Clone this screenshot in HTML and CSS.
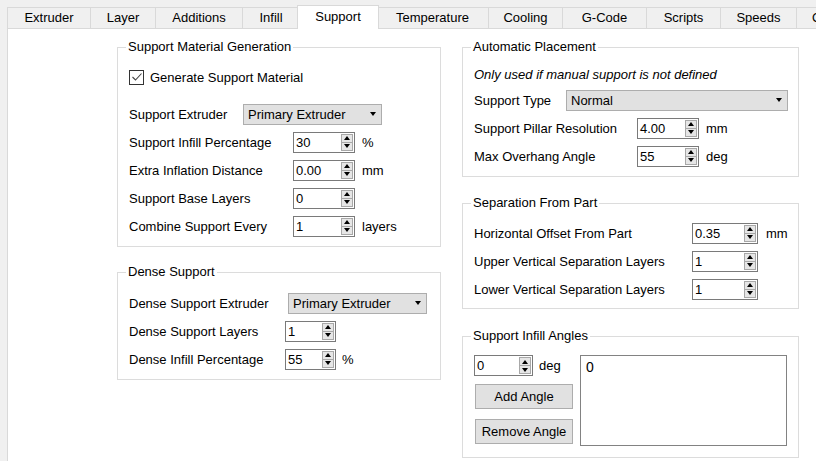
FILE: index.html
```html
<!DOCTYPE html>
<html lang="en">
<head>
<meta charset="utf-8">
<title>Support</title>
<link rel="stylesheet" href="styles.css">
</head>
<body>
<div class="tabbar">
  <div class="tab t-extruder">Extruder</div>
  <div class="tab t-layer">Layer</div>
  <div class="tab t-additions">Additions</div>
  <div class="tab t-infill">Infill</div>
  <div class="tab t-support active">Support</div>
  <div class="tab t-temperature">Temperature</div>
  <div class="tab t-cooling">Cooling</div>
  <div class="tab t-gcode">G-Code</div>
  <div class="tab t-scripts">Scripts</div>
  <div class="tab t-speeds">Speeds</div>
  <div class="tab t-other">Other</div>
</div>
<div class="pane">
  <div class="columns">
    <div class="col col-left">
      <div class="group g-gen">
        <div class="group-title">Support Material Generation</div>
        <div class="check-row">
          <span class="checkbox"><svg width="12" height="12" viewBox="0 0 12 12"><polyline points="1.5,6 4.5,9 10.5,2.5" fill="none" stroke="#444" stroke-width="1.1"/></svg></span>
          <span class="check-label">Generate Support Material</span>
        </div>
        <div class="combo-row r-ext">
          <span class="label">Support Extruder</span>
          <div class="combo w-ext"><span class="combo-text">Primary Extruder</span><span class="combo-arrow"></span></div>
        </div>
        <div class="grid g-left">
          <span class="label">Support Infill Percentage</span>
          <div class="spin w62"><span class="val">30</span><span class="btns"><span class="up"></span><span class="dn"></span></span></div>
          <span class="unit">%</span>
          <span class="label">Extra Inflation Distance</span>
          <div class="spin w62"><span class="val">0.00</span><span class="btns"><span class="up"></span><span class="dn"></span></span></div>
          <span class="unit">mm</span>
          <span class="label">Support Base Layers</span>
          <div class="spin w62"><span class="val">0</span><span class="btns"><span class="up"></span><span class="dn"></span></span></div>
          <span class="unit"></span>
          <span class="label">Combine Support Every</span>
          <div class="spin w62"><span class="val">1</span><span class="btns"><span class="up"></span><span class="dn"></span></span></div>
          <span class="unit">layers</span>
        </div>
      </div>
      <div class="group g-dense">
        <div class="group-title">Dense Support</div>
        <div class="combo-row r-dense">
          <span class="label">Dense Support Extruder</span>
          <div class="combo w-ext"><span class="combo-text">Primary Extruder</span><span class="combo-arrow"></span></div>
        </div>
        <div class="grid g-dense-grid">
          <span class="label">Dense Support Layers</span>
          <div class="spin w51"><span class="val">1</span><span class="btns"><span class="up"></span><span class="dn"></span></span></div>
          <span class="unit"></span>
          <span class="label">Dense Infill Percentage</span>
          <div class="spin w51"><span class="val">55</span><span class="btns"><span class="up"></span><span class="dn"></span></span></div>
          <span class="unit u6">%</span>
        </div>
      </div>
    </div>
    <div class="col col-right">
      <div class="group g-auto">
        <div class="group-title">Automatic Placement</div>
        <div class="note">Only used if manual support is not defined</div>
        <div class="combo-row r-type">
          <span class="label">Support Type</span>
          <div class="combo w-type"><span class="combo-text">Normal</span><span class="combo-arrow"></span></div>
        </div>
        <div class="grid g-auto-grid">
          <span class="label">Support Pillar Resolution</span>
          <div class="spin w62"><span class="val">4.00</span><span class="btns"><span class="up"></span><span class="dn"></span></span></div>
          <span class="unit">mm</span>
          <span class="label">Max Overhang Angle</span>
          <div class="spin w62"><span class="val">55</span><span class="btns"><span class="up"></span><span class="dn"></span></span></div>
          <span class="unit">deg</span>
        </div>
      </div>
      <div class="group g-sep">
        <div class="group-title">Separation From Part</div>
        <div class="grid g-sep-grid">
          <span class="label">Horizontal Offset From Part</span>
          <div class="spin w66"><span class="val">0.35</span><span class="btns"><span class="up"></span><span class="dn"></span></span></div>
          <span class="unit u8">mm</span>
          <span class="label">Upper Vertical Separation Layers</span>
          <div class="spin w66"><span class="val">1</span><span class="btns"><span class="up"></span><span class="dn"></span></span></div>
          <span class="unit"></span>
          <span class="label">Lower Vertical Separation Layers</span>
          <div class="spin w66"><span class="val">1</span><span class="btns"><span class="up"></span><span class="dn"></span></span></div>
          <span class="unit"></span>
        </div>
      </div>
      <div class="group g-angles">
        <div class="group-title">Support Infill Angles</div>
        <div class="angles">
          <div class="angles-left">
            <div class="angle-input">
              <div class="spin w59"><span class="val">0</span><span class="btns"><span class="up"></span><span class="dn"></span></span></div>
              <span class="unit u6">deg</span>
            </div>
            <div class="button">Add Angle</div>
            <div class="button b2">Remove Angle</div>
          </div>
          <div class="listbox">0</div>
        </div>
      </div>
    </div>
  </div>
</div>
</body>
</html>
```
FILE: styles.css
```css
* { box-sizing: border-box; }
html, body { margin: 0; padding: 0; }
body {
  width: 816px;
  height: 461px;
  overflow: hidden;
  background: #f0f0f0;
  font-family: "Liberation Sans", Arial, sans-serif;
  font-size: 13px;
  color: #000;
}
.tabbar {
  display: flex;
  padding: 7px 0 0 7px;
  height: 28px;
  white-space: nowrap;
}
.tab {
  height: 21px;
  line-height: 20px;
  padding: 0;
  text-align: center;
  border: 1px solid #d9d9d9;
  border-bottom: none;
  margin-left: -1px;
  background: #f0f0f0;
  flex: none;
}
.tab:first-child { margin-left: 0; }
.t-extruder { width: 84px; }
.t-layer { width: 66px; }
.t-additions { width: 88px; }
.t-infill { width: 58px; }
.t-support { width: 82px; }
.t-temperature { width: 113px; }
.t-cooling { width: 75px; }
.t-gcode { width: 85px; }
.t-scripts { width: 75px; }
.t-speeds { width: 77px; }
.t-other { width: 80px; text-align: left; padding-left: 15px; }
.tab.active {
  position: relative;
  z-index: 1;
  background: #fff;
  height: 24px;
  margin-top: -2px;
  margin-left: -3px;
  margin-right: -2px;
  padding-top: 1px;
}
.pane {
  margin-left: 7px;
  height: 433px;
  background: #fff;
  border-top: 1px solid #d9d9d9;
  border-left: 1px solid #d9d9d9;
}
.columns {
  display: flex;
  gap: 21px;
  padding: 18px 0 0 109px;
  align-items: flex-start;
}
.col { display: flex; flex-direction: column; flex: none; }
.col-left { width: 324px; }
.col-right { width: 337px; }

.group {
  border: 1px solid #dcdcdc;
  padding: 0 10px 6px 11px;
}
.group-title {
  margin: -9px 0 0 -3px;
  width: fit-content;
  padding: 0 2px;
  line-height: 16px;
  height: 16px;
  background: #fff;
  white-space: nowrap;
}
.g-dense { margin-top: 25px; }
.g-sep { margin-top: 26px; padding-bottom: 5px; }
.g-angles { margin-top: 27px; padding-bottom: 11px; }

.label { white-space: nowrap; }
.unit { white-space: nowrap; padding-left: 7px; }
.unit.u6 { padding-left: 6px; }
.unit.u8 { padding-left: 8px; }

.check-row {
  display: flex;
  align-items: center;
  height: 28px;
  margin-top: 8px;
}
.checkbox {
  width: 15px;
  height: 15px;
  border: 1px solid #333;
  background: #fff;
  display: flex;
  align-items: center;
  justify-content: center;
  flex: none;
}
.check-label { margin-left: 6px; }

.combo-row {
  display: grid;
  align-items: center;
  height: 28px;
}
.r-ext { margin-top: 9px; grid-template-columns: 114px auto; }
.r-dense { margin-top: 9px; grid-template-columns: 159px auto; }
.r-type { grid-template-columns: 92px auto; }

.combo {
  display: flex;
  align-items: center;
  height: 21px;
  border: 1px solid #adadad;
  background: #e1e1e1;
  padding: 0 5px 0 4px;
}
.combo-text { flex: 1; white-space: nowrap; }
.combo-arrow {
  width: 0;
  height: 0;
  border-left: 3.5px solid transparent;
  border-right: 3.5px solid transparent;
  border-top: 4px solid #000;
}
.w-ext { width: 139px; }
.w-type { width: 222px; }

.grid {
  display: grid;
  grid-auto-rows: 28px;
  align-items: center;
}
.g-left { grid-template-columns: 164px 62px auto; }
.g-dense-grid { grid-template-columns: 156px 51px auto; }
.g-auto-grid { grid-template-columns: 163px 62px auto; }
.g-sep-grid { margin-top: 8px; grid-template-columns: 218px 66px auto; }

.spin {
  display: flex;
  align-items: center;
  height: 21px;
  border: 1px solid #7a7a7a;
  background: #fff;
  padding: 0 1px 0 2px;
}
.w62 { width: 62px; }
.w51 { width: 51px; }
.w66 { width: 66px; }
.w59 { width: 59px; }
.val { flex: 1; white-space: nowrap; }
.btns {
  display: flex;
  flex-direction: column;
  width: 12px;
  height: 17px;
  flex: none;
}
.up, .dn {
  flex: 1;
  background: #e6e6e6;
  border: 1px solid #a8a8a8;
  display: flex;
  align-items: center;
  justify-content: center;
}
.dn { border-top: none; }
.up::after, .dn::after {
  content: "";
  width: 0;
  height: 0;
  border-left: 3.5px solid transparent;
  border-right: 3.5px solid transparent;
}
.up::after { border-bottom: 4px solid #000; }
.dn::after { border-top: 4px solid #000; }

.note {
  font-style: italic;
  height: 23px;
  line-height: 23px;
  margin-top: 8px;
  white-space: nowrap;
}

.angles {
  display: flex;
  margin-top: 11px;
  align-items: flex-start;
}
.angles-left {
  width: 99px;
  display: flex;
  flex-direction: column;
  flex: none;
}
.angle-input { display: flex; align-items: center; height: 21px; }
.button {
  margin: 8px 0 0 1px;
  width: 98px;
  height: 25px;
  line-height: 23px;
  text-align: center;
  border: 1px solid #adadad;
  background: #e1e1e1;
  white-space: nowrap;
}
.button.b2 { margin-top: 10px; }
.listbox {
  margin-left: 7px;
  width: 207px;
  height: 91px;
  border: 1px solid #828282;
  background: #fff;
  padding: 3px 5px;
  font-size: 14px;
}
```
